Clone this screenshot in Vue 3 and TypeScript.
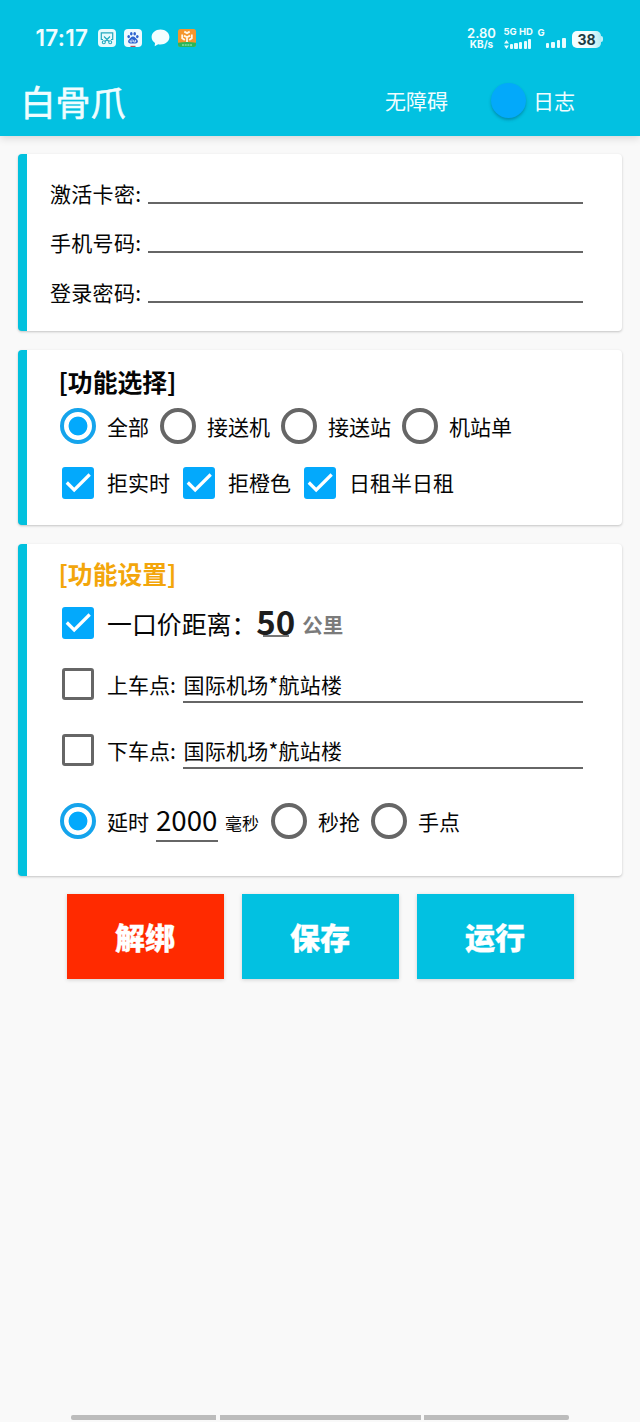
<script setup lang="ts">
import { reactive, ref } from 'vue'

interface Field {
  label: string
  value: string
}
interface Place extends Field {
  enabled: boolean
}

const fields = reactive<Field[]>([
  { label: '激活卡密:', value: '' },
  { label: '手机号码:', value: '' },
  { label: '登录密码:', value: '' },
])
const modes = ['全部', '接送机', '接送站', '机站单']
const mode = ref('全部')
const filters = reactive([
  { label: '拒实时', on: true },
  { label: '拒橙色', on: true },
  { label: '日租半日租', on: true },
])
const fixedPrice = ref(true)
const distance = ref('50')
const places = reactive<Place[]>([
  { label: '上车点:', value: '国际机场*航站楼', enabled: false },
  { label: '下车点:', value: '国际机场*航站楼', enabled: false },
])
const grab = ref('延时')
const delay = ref('2000')
const logOn = ref(true)
const bars = [5, 6, 7, 8.5, 10]
const bars2 = [5, 6.5, 8, 10]
</script>

<template>
  <div class="screen">
    <header class="top">
      <div class="status">
        <span class="clock">17:17</span>
        <svg class="ic" width="18" height="18" viewBox="0 0 18 18">
          <rect width="18" height="18" rx="4" fill="#e6fbfd" />
          <path d="M5 10.5H3.3V3.800h11.400v6.700H13M6 7.500l5 5M12 7.500l-5 5" fill="none" stroke="#25a9bf" stroke-width="1.2" />
          <circle cx="5.800" cy="13.300" r="1.500" fill="none" stroke="#25a9bf" stroke-width="1.100" />
          <circle cx="12.200" cy="13.300" r="1.500" fill="none" stroke="#25a9bf" stroke-width="1.100" />
        </svg>
        <svg class="ic" width="18" height="18" viewBox="0 0 18 18">
          <rect width="18" height="18" rx="4" fill="#effaff" />
          <g fill="#2d62cf">
            <ellipse cx="4.700" cy="7.600" rx="1.300" ry="1.700" />
            <ellipse cx="7.300" cy="4.700" rx="1.300" ry="1.800" />
            <ellipse cx="10.700" cy="4.700" rx="1.300" ry="1.800" />
            <ellipse cx="13.300" cy="7.600" rx="1.300" ry="1.700" />
            <path d="M9 7.500C11 7.500 11.400 9 12.800 10.300C14.800 12.200 13.800 14.500 11.700 14.500H6.300C4.200 14.500 3.200 12.200 5.200 10.300C6.600 9 7 7.500 9 7.500Z" />
          </g>
          <path d="M6.200 11.200v1.800h1.800v-2.800M9.700 10.900v2.100h1.900v-2.100" fill="none" stroke="#effaff" stroke-width=".8" />
          <rect x="6.500" y="16.800" width="5" height="1.200" fill="#b9505c" />
        </svg>
        <svg class="ic" width="19" height="18" viewBox="0 0 19 18">
          <path d="M9.500 0.500C4.500 0.500.600 3.800.600 8c0 2.500 1.300 4.600 3.400 6l-.3 3.200 3.500-1.900c.8.200 1.500.2 2.300.2 5 0 8.900-3.300 8.900-7.500S14.500.5 9.500.5z" fill="#f3feff" />
        </svg>
        <svg class="ic last" width="18" height="18" viewBox="0 0 18 18">
          <rect width="18" height="18" rx="2.500" fill="#f5962d" />
          <path d="M0 13.800q9-1.600 18 0v1.700a2.500 2.500 0 0 1-2.500 2.500h-13A2.500 2.500 0 0 1 0 15.500z" fill="#28b85a" />
          <path d="M9 13V8.300L6 6.600M9 8.300l3-1.700M6.300 2.600L9 4.100l2.700-1.500M4.200 5.500v3.700l2.600 1.800M13.800 5.500v3.700l-2.600 1.800" fill="none" stroke="#fff8e8" stroke-width="1.800" />
          <path d="M4 16h10" stroke="#b6ebc4" stroke-width="1" stroke-dasharray="2 .7" />
        </svg>
        <div class="speed"><b>2.80</b><i>KB/s</i></div>
        <div class="sim">
          <b>5G HD</b>
          <div class="bars">
            <svg width="5" height="9" viewBox="0 0 5 9"><path d="M2.500 0L5 3.500H0zM2.500 9L0 5.500h5z" fill="#e6fcff" /></svg>
            <span v-for="h in bars" :key="h" :style="{ height: h + 'px' }"></span>
          </div>
        </div>
        <b class="gsm">G</b>
        <div class="bars second">
          <span v-for="h in bars2" :key="h" :style="{ height: h + 'px' }"></span>
        </div>
        <div class="battery">38</div>
        <div class="tip"></div>
      </div>
      <div class="bar">
        <h1>白骨爪</h1>
        <span class="access">无障碍</span>
        <button class="switch" :class="{ on: logOn }" @click="logOn = !logOn"><span></span></button>
        <span class="log">日志</span>
      </div>
    </header>

    <main>
      <section class="card login">
        <label v-for="f in fields" :key="f.label" class="field">
          <span>{{ f.label }}</span>
          <input v-model="f.value" type="text" />
        </label>
      </section>

      <section class="card choose">
        <h2>[功能选择]</h2>
        <div class="row modes">
          <div v-for="m in modes" :key="m" class="opt" @click="mode = m">
            <span class="radio" :class="{ on: mode === m }"></span>
            <span class="txt">{{ m }}</span>
          </div>
        </div>
        <div class="row filters">
          <div v-for="f in filters" :key="f.label" class="opt" @click="f.on = !f.on">
            <span class="check" :class="{ on: f.on }">
              <svg v-if="f.on" viewBox="0 0 32 32"><path d="M4.800 15.500l7.400 7.400L27.700 7.500" /></svg>
            </span>
            <span class="txt">{{ f.label }}</span>
          </div>
        </div>
      </section>

      <section class="card settings">
        <h2 class="gold">[功能设置]</h2>
        <div class="row price">
          <div class="opt" @click="fixedPrice = !fixedPrice">
            <span class="check" :class="{ on: fixedPrice }">
              <svg v-if="fixedPrice" viewBox="0 0 32 32"><path d="M4.800 15.500l7.400 7.400L27.700 7.500" /></svg>
            </span>
            <span class="txt big">一口价距离：</span>
          </div>
          <div class="distance"><input v-model="distance" type="text" /></div>
          <span class="km">公里</span>
        </div>
        <div v-for="p in places" :key="p.label" class="row place">
          <div class="opt" @click="p.enabled = !p.enabled">
            <span class="check" :class="{ on: p.enabled }">
              <svg v-if="p.enabled" viewBox="0 0 32 32"><path d="M4.800 15.500l7.400 7.400L27.700 7.500" /></svg>
            </span>
            <span class="txt">{{ p.label }}</span>
          </div>
          <input v-model="p.value" type="text" />
        </div>
        <div class="row grab">
          <div class="opt first" @click="grab = '延时'">
            <span class="radio" :class="{ on: grab === '延时' }"></span>
            <span class="txt">延时</span>
          </div>
          <input v-model="delay" type="text" />
          <span class="ms">毫秒</span>
          <div v-for="g in ['秒抢', '手点']" :key="g" class="opt" @click="grab = g">
            <span class="radio" :class="{ on: grab === g }"></span>
            <span class="txt">{{ g }}</span>
          </div>
        </div>
      </section>

      <div class="actions">
        <button class="danger">解绑</button>
        <button>保存</button>
        <button>运行</button>
      </div>
    </main>

    <footer class="nav"><span></span><span></span><span></span></footer>
  </div>
</template>

<style>
body {
  background: #f9f9f9;
}
</style>

<style scoped>
* {
  box-sizing: border-box;
}
.screen {
  width: 640px;
  height: 1422px;
  display: flex;
  flex-direction: column;
  background: #f9f9f9;
  color: #050505;
  font-family: "Noto Sans CJK SC", sans-serif;
  font-size: 21px;
  overflow: hidden;
}
input,
button {
  font-family: inherit;
  color: inherit;
  border: 0;
  border-radius: 0;
  padding: 0;
  outline: 0;
}
input {
  background: transparent;
  min-width: 0;
}
.top {
  flex: none;
  height: 135.500px;
  background: #02c1e1;
  color: #f0fdff;
  box-shadow: 0 2px 8px rgba(0, 0, 0, 0.15);
}
.status {
  height: 76px;
  padding-left: 35.500px;
  display: flex;
  align-items: center;
}
.clock {
  width: 62px;
  font: 600 22.500px/30px Inter, sans-serif;
  letter-spacing: 0.300px;
}
.ic {
  flex: none;
  margin-right: 8.500px;
}
.ic.last {
  margin: 0;
}
.speed {
  width: 36px;
  margin-left: 267.500px;
  display: flex;
  flex-direction: column;
  align-items: center;
  font-family: Inter, sans-serif;
}
.speed b {
  font-size: 13px;
  line-height: 12px;
  font-weight: 600;
}
.speed i {
  font-style: normal;
  font-size: 10px;
  line-height: 10px;
  font-weight: 700;
}
.sim {
  width: 34px;
  height: 22px;
  margin-left: 4px;
  display: flex;
  flex-direction: column;
  justify-content: space-between;
  white-space: nowrap;
}
.sim b,
.gsm {
  font: 700 9.500px/10px Inter, sans-serif;
}
.bars {
  display: flex;
  align-items: flex-end;
  gap: 2px;
  height: 10px;
}
.bars span {
  width: 3.500px;
  border-radius: 1px;
  background: #e6fcff;
}
.sim .bars {
  gap: 1.400px;
}
.sim .bars span {
  width: 3.200px;
}
.gsm {
  width: 8px;
  margin: 0 0 11px 0;
}
.second {
  margin: 10px 0 0 0;
}
.battery {
  margin: 2px 0 0 6.500px;
  width: 29px;
  height: 17px;
  border-radius: 5px;
  background: linear-gradient(90deg, #f4feff 55%, #b5edf5);
  color: #203d45;
  font: 700 14px/17px Inter, sans-serif;
  text-align: center;
}
.tip {
  width: 2px;
  height: 6px;
  margin-top: 2px;
  border-radius: 0 2px 2px 0;
  background: #c3f1f8;
}
.bar {
  height: 52px;
  padding-left: 20.500px;
  display: flex;
  align-items: center;
}
h1 {
  width: 364.500px;
  margin: -3px 0 0;
  font-size: 35px;
  line-height: 50px;
  font-weight: 400;
  -webkit-text-stroke: 0.600px;
}
.switch {
  width: 52px;
  height: 36px;
  margin: -4px 0 0 26px;
  display: flex;
  align-items: center;
  background: none;
}
.switch.on {
  justify-content: flex-end;
}
.switch span {
  width: 35px;
  height: 35px;
  border-radius: 50%;
  background: #03a9fa;
  box-shadow: 0 2px 3px rgba(0, 60, 90, 0.35);
}
.access,
.log {
  margin-top: -5px;
}
.access {
  width: 63px;
}
.log {
  margin-left: 7px;
}
main {
  padding: 18px 18px 0;
}
.card {
  background: #fff;
  border-left: 9px solid #02c1de;
  border-radius: 4px;
  box-shadow: 0 1px 2.500px rgba(0, 0, 0, 0.22);
  margin-bottom: 18.500px;
}
.login {
  height: 177.500px;
  padding: 15px 39px 0 23px;
}
.field {
  height: 49.700px;
  display: flex;
  align-items: flex-start;
  letter-spacing: 0.300px;
}
.field span {
  width: 98px;
  line-height: 48px;
}
.field input {
  flex: 1;
  height: 35px;
  font-size: 21px;
  border-bottom: 2px solid #666;
}
.choose {
  height: 175.500px;
}
.card h2 {
  margin: 0;
  padding: 14px 0 0 31.500px;
  height: 48px;
  font-size: 24.800px;
  line-height: 34px;
  font-weight: 700;
}
.card h2.gold {
  color: #f3a60b;
  height: 51px;
  padding-top: 12px;
}
.row {
  display: flex;
  align-items: center;
  padding-left: 33px;
}
.modes {
  height: 56px;
  gap: 11px;
}
.filters {
  height: 58.500px;
  gap: 11px;
}
.filters .txt {
  margin-top: -1px;
}
.opt {
  display: flex;
  align-items: center;
}
.txt {
  margin-left: 11px;
  white-space: nowrap;
  line-height: 30px;
}
.radio {
  width: 36px;
  height: 36px;
  border: 4px solid #666;
  border-radius: 50%;
}
.radio.on {
  border-color: #15a4ec;
  background: radial-gradient(circle, #03a9fc 9px, transparent 9.800px);
}
.check {
  width: 32px;
  height: 32px;
  margin: 0 2px;
  border: 3px solid #666;
  border-radius: 3px;
}
.check.on {
  border: 0;
  background: #03a9fc;
}
.check svg {
  display: block;
}
.check path {
  fill: none;
  stroke: #fff;
  stroke-width: 3.200px;
}
.settings {
  height: 332px;
  margin-bottom: 18px;
}
.price {
  height: 56.500px;
}
.big {
  font-size: 24.900px;
  line-height: 36px;
}
.distance {
  position: relative;
  margin-top: -4px;
}
.distance input {
  display: block;
  width: 40px;
  height: 44px;
  font-size: 33px;
  font-weight: 700;
  color: #1d1d1d;
}
.distance::after {
  content: "";
  position: absolute;
  left: 7px;
  bottom: 6px;
  width: 26px;
  height: 1.500px;
  background: #777;
}
.km {
  margin: 3px 0 0 6px;
  font-size: 20.500px;
  font-weight: 700;
  line-height: 30px;
  color: #7b7b7b;
}
.place {
  height: 66px;
  padding-right: 39px;
}
.place .txt {
  width: 76px;
}
.place input {
  flex: 1;
  height: 36px;
  margin-top: 1px;
  padding-left: 0.500px;
  font-size: 21px;
  letter-spacing: 0.250px;
  border-bottom: 2px solid #666;
}
.grab {
  height: 66px;
  margin-top: 5px;
}
.grab .opt + .opt {
  margin-left: 11px;
}
.grab input {
  width: 62px;
  height: 42px;
  margin-left: 7px;
  padding-bottom: 2px;
  font-size: 27.700px;
  border-bottom: 2px solid #666;
}
.ms {
  width: 46px;
  margin-left: 7px;
  margin-top: 2px;
  font-size: 17px;
}
.actions {
  display: flex;
  justify-content: center;
  gap: 18px;
}
.actions button {
  width: 157px;
  height: 85px;
  background: #02c1e1;
  color: #fff;
  font-size: 30px;
  line-height: 42px;
  font-weight: 900;
  -webkit-text-stroke: 0.300px;
  padding-bottom: 1px;
  box-shadow: 0 1px 4px rgba(0, 0, 0, 0.16);
}
.actions .danger {
  background: #ff2a00;
}
.nav {
  margin-top: auto;
  height: 7px;
  display: flex;
  justify-content: center;
  gap: 3.500px;
}
.nav span {
  width: 145px;
  height: 5px;
  background: #bcbcbc;
}
.nav span:nth-child(2) {
  width: 201px;
}
.nav span:first-child {
  border-radius: 2px 0 0 2px;
}
.nav span:last-child {
  border-radius: 0 2px 2px 0;
}
</style>
